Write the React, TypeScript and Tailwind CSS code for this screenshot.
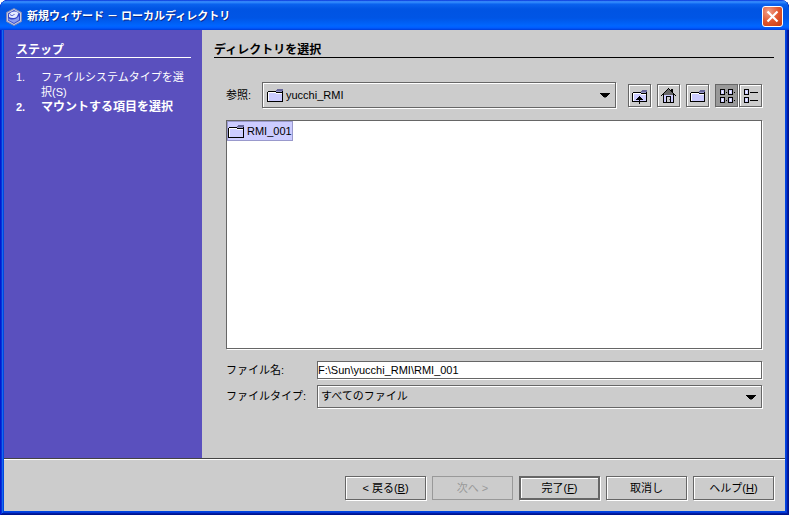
import React, { useState } from 'react';

const raised = 'border border-[#666] shadow-[inset_1px_1px_0_#fff,1px_1px_0_#fff]';

const AppIcon = () => (
  <svg width="16" height="18" viewBox="0 0 16 18" aria-hidden="true">
    <path d="M8 .5 15.500 4.500v9L8 17.500.5 13.500v-9Z" fill="#c9cce0" stroke="#7c86b8" />
    <path d="M8 2 14 5.500v7L8 16 2 12.500v-7Z" fill="#3446c8" />
    <path d="M3 6.500C5 3.500 9 2.500 12.500 5L11 8.500C9 10.500 5.500 10.500 3 9Z" fill="#e6ebff" />
    <path d="M4 6.500c1.500 1.500 3 1.500 4.500-.5" stroke="#4a5cd0" fill="none" />
    <path d="M2.500 10c2.500 2.500 7.500 2 10.500-2v4L8 15l-5.500-3Z" fill="#8a9cf0" />
  </svg>
);

const FolderIcon = () => (
  <svg
    className="shrink-0"
    width="16"
    height="13"
    viewBox="0 3 16 13"
    shapeRendering="crispEdges"
    aria-hidden="true"
  >
    <path fill="#ccf" d="M1 6h14v9H1z" />
    <path fill="#669" d="M10 3h6v1h-6zM9 4h7v1H9z" />
    <path fill="#99c" d="M9 5h6v1H9z" />
    <path fill="#000" d="M0 6h1v10H0zM1 5h8v1H1zM9 6h6v1H9zM15 5h1v11h-1zM0 15h16v1H0z" />
    <path fill="#fff" d="M1 6h1v9H1zM1 6h8v1H1zM9 7h6v1H9z" />
  </svg>
);

const ToolIcon = ({ children }: { children: React.ReactNode }) => (
  <svg width="18" height="18" viewBox="0 0 18 18" shapeRendering="crispEdges" aria-hidden="true">
    {children}
  </svg>
);

const ToolFolder = () => (
  <>
    <path fill="#ccf" d="M3 6h12v8H3z" />
    <path fill="#669" d="M11 3h5v1h-5zM10 4h6v1h-6z" />
    <path fill="#99c" d="M10 5h5v1h-5z" />
    <path fill="#000" d="M1 6h1v9H1zM2 14h14v1H2zM15 5h1v9h-1zM2 5h8v1H2zM10 6h5v1h-5z" />
    <path fill="#fff" d="M2 6h1v8H2zM3 6h7v1H3zM10 7h5v1h-5z" />
  </>
);

const NewFolderIcon = () => (
  <ToolIcon>
    <ToolFolder />
  </ToolIcon>
);

const UpFolderIcon = () => (
  <ToolIcon>
    <ToolFolder />
    <path fill="#000" d="M8 9h1v8H8zM7 10h3v1H7zM6 11h5v1H6zM5 12h7v1H5z" />
  </ToolIcon>
);

const HomeIcon = () => (
  <ToolIcon>
    <path fill="#ccf" d="M4 8h9v7H4z" />
    <path fill="#ccc" d="M7 10h3v5H7z" />
    <path fill="#666" d="M8 2h1v1H8zM7 3h3v1H7zM6 4h5v1H6zM5 5h7v1H5zM4 6h9v2H4zM9 12h1v1H9z" />
    <path
      fill="#000"
      d="M8 1h1v1H8zM7 2h1v1H7zM6 3h1v1H6zM5 4h1v1H5zM4 5h1v1H4zM3 6h1v1H3zM2 7h1v1H2zM1 8h1v1H1zM9 2h1v1H9zM10 3h1v1h-1zM11 4h1v1h-1zM12 5h1v1h-1zM13 6h1v1h-1zM14 7h1v1h-1zM15 8h1v1h-1zM11 2h1v2h-1zM12 2h1v3h-1zM3 7h1v9H3zM13 7h1v9h-1zM4 15h9v1H4zM6 9h1v6H6zM10 9h1v6h-1zM7 9h3v1H7z"
    />
  </ToolIcon>
);

const Tile = ({ x, y }: { x: number; y: number }) => (
  <>
    <rect x={x} y={y} width="5" height="6" fill="#000" />
    <rect x={x + 1} y={y + 1} width="3" height="4" fill="#ccf" />
    <rect x={x + 2} y={y + 2} width="1" height="2" fill="#fff" />
  </>
);

const ListViewIcon = () => (
  <ToolIcon>
    <Tile x={2} y={2} />
    <Tile x={10} y={2} />
    <Tile x={2} y={10} />
    <Tile x={10} y={10} />
    <path d="M8 5h1v1H8zM16 5h1v1h-1zM8 13h1v1H8zM16 13h1v1h-1z" />
  </ToolIcon>
);

const DetailViewIcon = () => (
  <ToolIcon>
    <Tile x={2} y={2} />
    <Tile x={2} y={10} />
    <path d="M8 5h8v1H8zM8 13h8v1H8z" />
  </ToolIcon>
);

const Arrow = () => (
  <svg
    className="pointer-events-none absolute right-[5px] top-1/2 -translate-y-1/2"
    width="10"
    height="5"
    viewBox="0 0 10 5"
    shapeRendering="crispEdges"
    aria-hidden="true"
  >
    <path d="M0 0h10v1H0zM1 1h8v1H1zM2 2h6v1H2zM3 3h4v1H3zM4 4h2v1H4z" />
  </svg>
);

interface ToolButtonProps {
  label: string;
  pressed?: boolean;
  onClick?: () => void;
  children: React.ReactNode;
}

const ToolButton: React.FC<ToolButtonProps> = ({ label, pressed, onClick, children }) => (
  <button
    type="button"
    aria-label={label}
    aria-pressed={pressed}
    onClick={onClick}
    className={`size-[23px] shrink-0 p-[2px] ${
      pressed ? 'border border-[#666] bg-[#999] shadow-[1px_1px_0_#fff]' : raised
    }`}
  >
    {children}
  </button>
);

const footerButton = 'h-6 w-[81px] text-[11px]';

export default function App() {
  const [view, setView] = useState<'list' | 'detail'>('list');
  const [fileName, setFileName] = useState('F:\\Sun\\yucchi_RMI\\RMI_001');

  return (
    <div className="flex h-screen flex-col overflow-hidden rounded-t-lg bg-[#0046e0] px-1 pb-1 font-['Liberation_Sans','Noto_Sans_CJK_JP',sans-serif] text-[11px] leading-[15px] text-black shadow-[inset_1px_0_0_#0019cf,inset_-1px_-1px_0_#00138c,inset_2px_0_0_#0831d9,inset_-2px_-2px_0_#001ea0,inset_3px_0_0_#166aee,inset_-3px_-3px_0_#0437d8]">
      <header className="-mx-1 flex h-[30px] shrink-0 items-center gap-[5px] rounded-t-lg bg-[linear-gradient(180deg,#0831d9_0%,#3a93ff_6%,#0a62ee_14%,#0054e3_30%,#0055e5_60%,#0066ff_86%,#005bff_93%,#003dd7_100%)] px-1.5 pt-[3px]">
        <AppIcon />
        <h1 className="flex-1 text-[11px] font-bold text-white [text-shadow:1px_1px_0_#0a2a8a]">
          新規ウィザード － ローカルディレクトリ
        </h1>
        <button
          type="button"
          aria-label="閉じる"
          className="flex size-[21px] items-center justify-center rounded-[3px] border border-white bg-[radial-gradient(circle_at_30%_25%,#f0a08a,#e2572f_50%,#c53a12)]"
        >
          <svg width="13" height="13" viewBox="0 0 13 13" aria-hidden="true">
            <path d="m1.500 1.500 10 10M11.500 1.500l-10 10" stroke="#fff" strokeWidth="2.200" />
          </svg>
        </button>
      </header>

      <div className="flex min-h-0 flex-1 bg-[#ccc]">
        <aside className="w-[198px] shrink-0 bg-[#5a50be] pl-3 pr-[11px] text-white">
          <h2 className="border-b border-white pt-[13px] text-[12px] font-bold leading-[14px]">ステップ</h2>
          <ol className="pt-3">
            <li className="flex">
              <span className="w-[25px] shrink-0">1.</span>
              <span>ファイルシステムタイプを選択(S)</span>
            </li>
            <li className="flex font-bold">
              <span className="w-[25px] shrink-0">2.</span>
              <span className="text-[12px]">マウントする項目を選択</span>
            </li>
          </ol>
        </aside>

        <main className="flex min-w-0 flex-1 flex-col pl-3 pr-[11px]">
          <h2 className="border-b border-black pt-[13px] text-[12px] font-bold leading-[14px]">
            ディレクトリを選択
          </h2>

          <div className="flex min-h-0 flex-1 flex-col px-3 pb-[50px] pt-6">
            <div className="flex items-center">
              <label htmlFor="look-in" className="w-9 shrink-0">
                参照:
              </label>
              <div className={`relative flex h-[26px] min-w-0 flex-1 items-center pl-1 ${raised}`}>
                <FolderIcon />
                <select id="look-in" className="h-full flex-1 appearance-none pl-[3px] outline-none">
                  <option>yucchi_RMI</option>
                </select>
                <Arrow />
              </div>
              <div className="ml-3 flex gap-1.5">
                <ToolButton label="1レベル上へ">
                  <UpFolderIcon />
                </ToolButton>
                <ToolButton label="ホーム">
                  <HomeIcon />
                </ToolButton>
                <ToolButton label="新規フォルダの作成">
                  <NewFolderIcon />
                </ToolButton>
                <div className="flex gap-px">
                  <ToolButton label="リスト" pressed={view === 'list'} onClick={() => setView('list')}>
                    <ListViewIcon />
                  </ToolButton>
                  <ToolButton label="詳細" pressed={view === 'detail'} onClick={() => setView('detail')}>
                    <DetailViewIcon />
                  </ToolButton>
                </div>
              </div>
            </div>

            <ul className="mt-3 min-h-16 flex-1 border border-[#666] bg-white shadow-[1px_1px_0_#fff]">
              <li className="flex">
                <button
                  type="button"
                  className="flex h-5 items-center gap-[3px] border border-[#99c] bg-[#ccf]"
                >
                  <FolderIcon />
                  RMI_001
                </button>
              </li>
            </ul>

            <div className="mt-3 grid grid-cols-[91px_1fr] items-center gap-y-1.5">
              <label htmlFor="file-name">ファイル名:</label>
              <input
                id="file-name"
                type="text"
                value={fileName}
                onChange={(e) => setFileName(e.target.value)}
                className="h-[18px] w-full border border-[#666] bg-white shadow-[1px_1px_0_#fff] outline-none"
              />
              <label htmlFor="file-type">ファイルタイプ:</label>
              <div className={`relative flex h-[23px] items-center ${raised}`}>
                <select id="file-type" className="h-full flex-1 appearance-none pl-[3px] outline-none">
                  <option>すべてのファイル</option>
                </select>
                <Arrow />
              </div>
            </div>
          </div>
        </main>
      </div>

      <footer className="flex shrink-0 justify-end gap-1.5 border-t border-[#444] bg-[#ccc] pb-[11px] pr-[11px] pt-[17px] shadow-[inset_0_1px_0_#fff]">
        <button type="button" className={`${footerButton} ${raised}`}>
          &lt; 戻る(<u>B</u>)
        </button>
        <button type="button" disabled className={`${footerButton} border border-[#999] text-[#999]`}>
          次へ &gt;
        </button>
        <button
          type="button"
          className={`${footerButton} border-2 border-[#666] shadow-[inset_1px_1px_0_#fff,1px_1px_0_#fff]`}
        >
          完了(<u>F</u>)
        </button>
        <button type="button" className={`${footerButton} ${raised}`}>
          取消し
        </button>
        <button type="button" className={`${footerButton} ${raised}`}>
          ヘルプ(<u>H</u>)
        </button>
      </footer>
    </div>
  );
}
